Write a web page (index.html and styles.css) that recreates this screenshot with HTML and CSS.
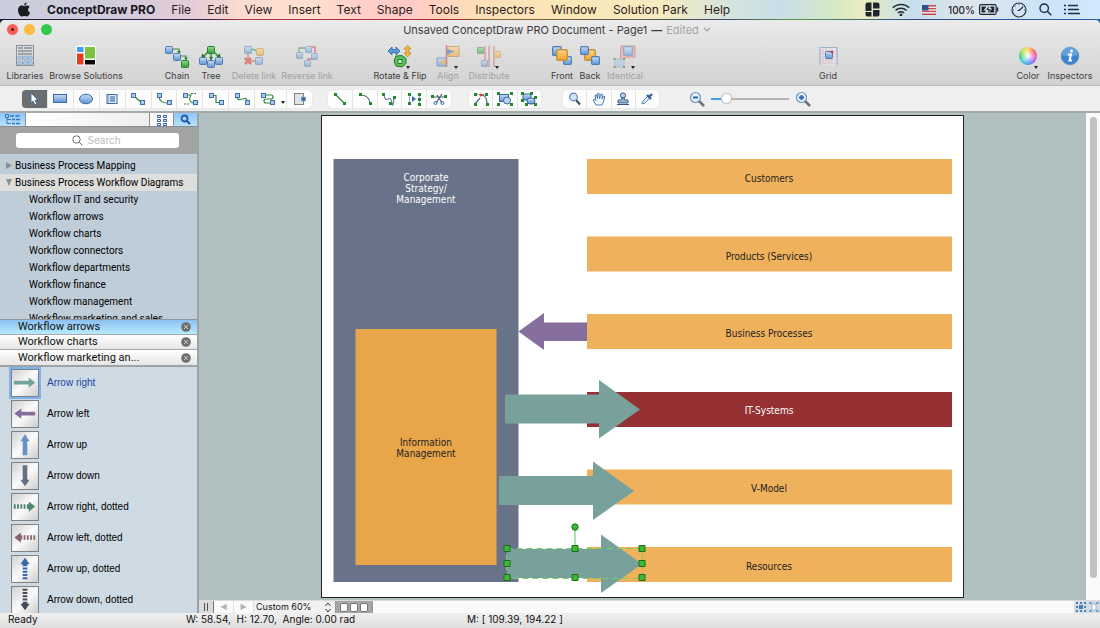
FILE: index.html
```html
<!DOCTYPE html>
<html lang="en">
<head>
<meta charset="utf-8">
<title>ConceptDraw PRO</title>
<link rel="stylesheet" href="styles.css">
</head>
<body>
<svg class="defs" aria-hidden="true">
  <defs>
    <linearGradient id="blue" x1="0" y1="0" x2="0" y2="1"><stop offset="0" stop-color="#c6dcf4"/><stop offset="1" stop-color="#5f95d3"/></linearGradient>
    <linearGradient id="green" x1="0" y1="0" x2="0" y2="1"><stop offset="0" stop-color="#8fdc86"/><stop offset="1" stop-color="#2f9c36"/></linearGradient>
    <linearGradient id="gold" x1="0" y1="0" x2="0" y2="1"><stop offset="0" stop-color="#ffd98a"/><stop offset="1" stop-color="#f0a024"/></linearGradient>
    <symbol id="n" viewBox="0 0 8 8"><rect x=".5" y=".5" width="7" height="7" rx="1" fill="url(#blue)" stroke="#4f7db4"/></symbol>
    <symbol id="g" viewBox="0 0 8 8"><rect x=".5" y=".5" width="7" height="7" rx="1" fill="url(#green)" stroke="#2b8030"/></symbol>
    <symbol id="y" viewBox="0 0 8 8"><rect x=".5" y=".5" width="7" height="7" rx="1" fill="url(#gold)" stroke="#c79240"/></symbol>
    <symbol id="s" viewBox="0 0 5 5"><rect x=".5" y=".5" width="4" height="4" fill="#a9cbef" stroke="#3f71ae"/></symbol>
    <symbol id="d" viewBox="0 0 3 3"><rect width="3" height="3" fill="#1f8a2b"/></symbol>
    <symbol id="x" viewBox="0 0 10 10"><circle cx="5" cy="5" r="4.8" fill="#6e6e6e"/><path d="M3 3l4 4M7 3l-4 4" stroke="#c4c4c4" stroke-width="1"/></symbol>
  </defs>
</svg>

<header class="menubar">
  <svg class="apple" viewBox="0 0 14 16"><path d="M9.600.5c.1 1.300-1.100 2.900-2.500 2.900C6.900 2.100 8.200.7 9.600.5zM7.200 4.300c.6 0 1.500-.8 2.800-.8 1 0 2 .5 2.700 1.500-2.300 1.400-2 4.600.5 5.600-.5 1.500-1.800 3.900-3.200 3.900-1 0-1.400-.6-2.600-.6s-1.600.6-2.600.6C3 14.500 1 11 1 8.200c0-3 1.900-4.600 3.700-4.600 1.200 0 1.900.7 2.500.7z" fill="#1b1b22"/></svg>
  <nav class="menus">
    <button class="app-name">ConceptDraw PRO</button>
    <button>File</button><button>Edit</button><button>View</button><button>Insert</button><button>Text</button><button>Shape</button><button>Tools</button><button>Inspectors</button><button>Window</button><button>Solution Park</button><button>Help</button>
  </nav>
  <div class="tray">
    <svg width="15" height="15" viewBox="0 0 15 15"><path d="M2.500.5H6.500V9H.500V2.500a2 2 0 0 1 2-2zM.5 10h6v4.500h-4a2 2 0 0 1-2-2zM8 .5h4.500a2 2 0 0 1 2 2v4H8zM8 8h6.500v4.500a2 2 0 0 1-2 2H8z" fill="#22262c"/></svg>
    <svg width="18" height="13" viewBox="0 0 18 13" fill="none" stroke="#1f2c38" stroke-width="1.500"><path d="M.8 4.800a11.600 11.600 0 0 1 16.400 0M3.500 7.500a7.800 7.800 0 0 1 11 0M6 10a4.200 4.200 0 0 1 6 0"/><circle cx="9" cy="12" r=".7" fill="#1f2c38"/></svg>
    <svg width="14" height="10" viewBox="0 0 14 10"><rect width="14" height="10" fill="#f1e3e2"/><path d="M0 .7h14M0 3.600h14M0 6.400h14M0 9.300h14" stroke="#c24a4e" stroke-width="1.400"/><rect width="6.500" height="5.500" fill="#33508a"/></svg>
    <span class="charge">100%
      <svg width="20" height="11" viewBox="0 0 20 11"><rect x=".6" y=".6" width="16.500" height="9.800" rx="1.500" fill="none" stroke="#1e2730" stroke-width="1.200"/><path d="M18.500 3.500v4" stroke="#1e2730" stroke-width="1.500"/><path d="M2.500 2.500h5l-3 4h2.500l-1 2H2.500zM12 2.500h3.200v6H9.500l3.200-4.500h-1.700z" fill="#1e2730"/><path d="M10.500 1L6.500 6h2.500l-.5 4 4-5H9.800z" fill="#1e2730" stroke="#dbe9ee" stroke-width=".6"/></svg></span>
    <svg width="16" height="16" viewBox="0 0 16 16" fill="none" stroke="#27313a"><circle cx="8" cy="8" r="7" stroke-width="1.200"/><path d="M8 8.500l4-3.500M8.500 8.500H6.500" stroke-width="1.200"/><path d="M8 2v1.200M2 8h1M13 8h1M4 4l.7.7M12 4l-.7.7" stroke-width=".8"/></svg>
    <svg width="13" height="13" viewBox="0 0 13 13" fill="none" stroke="#1f2c38" stroke-width="1.400"><circle cx="5.200" cy="5.200" r="4.200"/><path d="M8.300 8.300l4 4"/></svg>
    <svg width="16" height="11" viewBox="0 0 16 11" stroke="#1f2c38" stroke-width="1.500"><path d="M0 1.500h2M0 5.500h2M0 9.500h2M4 1.500h10M4 5.500h11M4 9.500h12"/></svg>
  </div>
</header>

<main class="window">
  <div class="titlebar">
    <div class="lights"><button class="close" aria-label="Close"></button><button class="mini" aria-label="Minimize"></button><button class="full" aria-label="Zoom"></button></div>
    <h1>Unsaved ConceptDraw PRO Document - Page1 <b>—</b> <span>Edited</span><svg width="8" height="5" viewBox="0 0 8 5"><path d="M1 1l3 3 3-3" fill="none" stroke="#a0a0a0" stroke-width="1.200"/></svg></h1>
  </div>

  <div class="toolbar">
    <div class="group">
      <button class="w50"><svg viewBox="0 0 24 24"><rect x="3.500" y="1.500" width="17" height="20" fill="#d9dcdf" stroke="#8d9299"/><path d="M5 4h4M11 4h8M5 7h14M5 10h14" stroke="#8b9096" stroke-width="1.500"/><path d="M9.500 2.500v19M15 11v10" stroke="#a4abb3"/><g fill="#a9cdf2" stroke="#7b97b6" stroke-width=".6"><circle cx="6.500" cy="14" r="2"/><circle cx="12.300" cy="14" r="2"/><circle cx="17.500" cy="14" r="2"/><circle cx="6.500" cy="19" r="2"/><circle cx="12.300" cy="19" r="2"/><circle cx="17.500" cy="19" r="2"/></g></svg>Libraries</button>
      <button class="w72"><svg viewBox="0 0 24 24"><rect x="2" y="1.500" width="20" height="20" rx="2" fill="#fff"/><path d="M3 3h6.500v5H3z" fill="#3f9ef2"/><path d="M3 9.500h6.500v11H3z" fill="#e23d21"/><path d="M11 3h10v11.500H11z" fill="#7cc242"/><path d="M11 16h10v4.500H11z" fill="#050505"/></svg>Browse Solutions</button>
    </div>
    <div class="group">
      <button class="w34"><svg viewBox="0 0 24 24"><path d="M8 5h6v4M16 12h5v5" fill="none" stroke="#3a9a3c" stroke-width="1.200"/><path d="M12 7h4l-2 2.500zM19 13.500h4l-2 2.500z" fill="#2b8030"/><use href="#n" x="0" y="2" width="8" height="8"/><use href="#n" x="8" y="9" width="8" height="8"/><use href="#g" x="16" y="16" width="8" height="8"/></svg>Chain</button>
      <button class="w34"><svg viewBox="0 0 24 24"><path d="M9 8l-5 5M15 8l5 5M12 9v8" stroke="#2f9236" stroke-width="1.500"/><path d="M2.500 13.500l.5-4 3.500 3zM21.500 13.500l-.5-4-3.500 3zM10 13h4l-2 3z" fill="#237a2a"/><use href="#g" x="8" y="2" width="8" height="8"/><use href="#n" x="0" y="13" width="8" height="8"/><use href="#n" x="8" y="16" width="8" height="8"/><use href="#n" x="16" y="13" width="8" height="8"/></svg>Tree</button>
      <button class="w52" disabled><svg viewBox="0 0 24 24"><path d="M9 5l7 2" stroke="#2f9236" stroke-width="1.500"/><path d="M6 9v8h9" fill="none" stroke="#d64a35" stroke-width="1.300"/><use href="#n" x="2" y="2" width="8" height="8"/><use href="#y" x="14" y="4" width="8" height="8"/><path d="M3 14l6 6M9 14l-6 6" stroke="#d63a25" stroke-width="2.500"/><use href="#n" x="13" y="13" width="8" height="8"/></svg>Delete link</button>
      <button class="w54" disabled><svg viewBox="0 0 24 24"><path d="M4 8V4h7" fill="none" stroke="#2f9236" stroke-width="1.300"/><path d="M16 3h4v6M19 15h-6v3" fill="none" stroke="#d6362f" stroke-width="1.500"/><use href="#n" x="1" y="8" width="7" height="7"/><use href="#n" x="10" y="2" width="7" height="7"/><use href="#n" x="16" y="9" width="7" height="7"/><use href="#n" x="9" y="16" width="7" height="7"/></svg>Reverse link</button>
    </div>
    <div class="group">
      <button class="w56"><svg viewBox="0 0 24 24"><path d="M0 7l4-4v2.500h4V3l4 4-4 4V8.500H4V11z" fill="#5a9be0" stroke="#275d9e" stroke-width=".8"/><path d="M19.500 1.500l3.500 3.500h-2.200v4H23L19.500 13 16 9h2.200V5H16z" fill="#f6b93b" stroke="#c0851c" stroke-width=".8"/><path d="M8 12l6-.5 4 3v5l-4 3.500-6-1-2-5z" fill="#58c45c" stroke="#237a2a"/><path d="M10 15.500h4v4h-4z" fill="#e5f3e3" stroke="#237a2a"/></svg>Rotate &amp; Flip<i class="caret"></i></button>
      <button class="w40" disabled><svg viewBox="0 0 24 24"><path d="M10.500 1v22" stroke="#c43a3a" stroke-width="1.500"/><path d="M12 2.500h11v10H12z" fill="url(#gold)" stroke="#b58233"/><path d="M11 5l8 2.500-8 3z" fill="#3b72b8"/><path d="M1 14h9v8H1z" fill="url(#blue)" stroke="#3f6da6"/><path d="M10 15l-6 3 6 3z" fill="#f0a024"/></svg>Align<i class="caret"></i></button>
      <button class="w42" disabled><svg viewBox="0 0 24 24"><path d="M8 2v21M12 2v21M17 2v21" stroke="#c43a3a"/><use href="#g" x="0" y="3" width="7" height="7"/><use href="#n" x="4" y="16" width="7" height="7"/><use href="#y" x="17" y="7" width="7" height="7"/></svg>Distribute<i class="caret"></i></button>
    </div>
    <div class="group">
      <button class="w28"><svg viewBox="0 0 24 24"><use href="#n" x="2" y="2" width="10" height="10"/><use href="#n" x="13" y="12" width="9" height="9"/><use href="#y" x="6" y="5" width="12" height="12"/></svg>Front</button>
      <button class="w28"><svg viewBox="0 0 24 24"><use href="#y" x="6" y="5" width="12" height="12"/><use href="#n" x="2" y="2" width="9" height="9"/><use href="#n" x="13" y="12" width="9" height="9"/></svg>Back</button>
      <button class="w42" disabled><svg viewBox="0 0 24 24"><path d="M8 2h14v11h-8l-7 5z" fill="#eba9a0" stroke="#d35b50"/><use href="#n" x="10" y="2" width="10" height="10"/><rect x="2" y="15" width="9" height="8" fill="#a9c8e8" stroke="#9ab"/><path d="M.5 14h2v2h-2zM10 14h2v2h-2zM.5 22h2v2h-2zM10 22h2v2h-2z" fill="#1f8a2b"/></svg>Identical<i class="caret"></i></button>
    </div>
    <div class="group">
      <button class="w40"><svg viewBox="0 0 24 24"><rect x="4" y="3.500" width="17" height="17" fill="#e3e8ee"/><path d="M4 7h17M4 10h17M4 13h17M4 16h17M4 19h17M7 4v16M10 4v16M13 4v16M16 4v16" stroke="#e0b4b4" stroke-width=".7"/><path d="M4 21V3.500h17V21" fill="none" stroke="#9db2cc" stroke-width="1.200"/><use href="#n" x="9" y="7" width="8" height="8"/><circle cx="16" cy="8" r="1.300" fill="#d82a1c"/></svg>Grid</button>
    </div>
    <div class="group">
      <button class="w36"><span class="wheel"></span>Color<i class="caret"></i></button>
      <button class="w48"><svg viewBox="0 0 24 24"><circle cx="12" cy="12" r="8.800" fill="#3a83cd" stroke="#6f93b8"/><path d="M4 11a8 8 0 0 1 16 0q-8 3-16 0z" fill="#7db4ea" opacity=".6"/><circle cx="13.500" cy="7" r="1.500" fill="#fff"/><path d="M10 10.500h3l-1.500 6h2.500" fill="none" stroke="#fff" stroke-width="2"/></svg>Inspectors</button>
    </div>
  </div>

  <div class="tools">
    <div class="seg seg-main">
      <button class="on" aria-label="Select"><svg viewBox="0 0 16 14"><path d="M5 1l7 7H9l1.800 4-2 .9L7 9 5 11z" fill="#fff" stroke="#3b6da8" stroke-width=".9"/></svg></button>
      <button aria-label="Rectangle"><svg viewBox="0 0 16 14"><rect x="1.500" y="2.500" width="13" height="8" fill="url(#blue)" stroke="#3a68a6"/></svg></button>
      <button aria-label="Ellipse"><svg viewBox="0 0 16 14"><ellipse cx="8" cy="7" rx="6.500" ry="4.800" fill="url(#blue)" stroke="#3a68a6"/></svg></button>
      <button aria-label="Text"><svg viewBox="0 0 16 14"><rect x="3" y="2.500" width="10" height="9" fill="#dceafa" stroke="#3f6ca6"/><path d="M6 5h5M6 7h5M6 9h5" stroke="#35547c"/><path d="M4.500 3v8" stroke="#8db4e0"/></svg></button>
      <button aria-label="Direct connector"><svg viewBox="0 0 16 14"><path d="M4 4l8 7" stroke="#2c8a32" stroke-width="1.200"/><use href="#s" x="1" y="1" width="5" height="5"/><use href="#s" x="10" y="8" width="5" height="5"/></svg></button>
      <button aria-label="Arc connector"><svg viewBox="0 0 16 14"><path d="M3 5q1 6 8 6" fill="none" stroke="#2c8a32" stroke-width="1.200"/><use href="#s" x="1" y="1" width="5" height="5"/><use href="#s" x="11" y="8" width="5" height="5"/></svg></button>
      <button aria-label="Bezier connector"><svg viewBox="0 0 16 14"><path d="M5 3h4q-2 4-1 5.500t3 2.500" fill="none" stroke="#2c8a32" stroke-width="1.100"/><path d="M9 1.500h5M2 12h6" stroke="#2c8a32" stroke-dasharray="2 1"/><use href="#s" x="1" y="1" width="5" height="5"/><use href="#s" x="11" y="8" width="5" height="5"/></svg></button>
      <button aria-label="Smart connector"><svg viewBox="0 0 16 14"><path d="M4 3.500h4v7h5" fill="none" stroke="#2c8a32" stroke-width="1.200"/><use href="#s" x="1" y="1" width="5" height="5"/><use href="#s" x="11" y="8" width="5" height="5"/></svg></button>
      <button aria-label="Curved connector"><svg viewBox="0 0 16 14"><path d="M3 4q0 4 3 3.500t5-1 2 3" fill="none" stroke="#2c8a32" stroke-width="1.200"/><use href="#s" x="1" y="1" width="5" height="5"/><use href="#s" x="11" y="8" width="5" height="5"/></svg></button>
      <button aria-label="Round connector"><svg viewBox="0 0 16 14"><path d="M4 3h7q2 0 2 2t-2 2H6q-2 0-2 2t2 2h5" fill="none" stroke="#2c8a32" stroke-width="1.200"/><use href="#s" x="1" y="1" width="5" height="5"/><use href="#s" x="10" y="8" width="5" height="5"/></svg></button>
      <button class="drop" aria-label="More connectors"><i class="caret"></i></button>
      <button aria-label="Insert page"><svg viewBox="0 0 16 14"><rect x="2.500" y="1.500" width="9" height="11" fill="#dfe2e6" stroke="#7d838a"/><path d="M9.500 5l4 4M13.500 5l-4 4M9 7h5" stroke="#3169ae" stroke-width="1.200"/></svg></button>
    </div>
    <div class="seg seg-5">
      <button aria-label="Line"><svg viewBox="0 0 16 14"><path d="M4 3l8 8" stroke="#2c8a32" stroke-width="1.200"/><use href="#d" x="2" y="1" width="3" height="3"/><use href="#d" x="11" y="10" width="3" height="3"/></svg></button>
      <button aria-label="Arc"><svg viewBox="0 0 16 14"><path d="M3 3q9 0 10 8" fill="none" stroke="#4a6c92" stroke-width="1.200"/><use href="#d" x="2" y="1" width="3" height="3"/><use href="#d" x="12" y="10" width="3" height="3"/></svg></button>
      <button aria-label="Curve"><svg viewBox="0 0 16 14"><path d="M3 3q1 6 4 4t4 4 2-5" fill="none" stroke="#6d879f" stroke-width="1.200"/><use href="#d" x="1" y="1" width="3" height="3"/><use href="#d" x="12" y="4" width="3" height="3"/><use href="#d" x="8" y="10" width="3" height="3"/></svg></button>
      <button aria-label="Split"><svg viewBox="0 0 16 14"><path d="M3.500 2v10M13.500 2v10" stroke="#8daacb"/><path d="M6 4l4 3-4 3z" fill="#376bb0"/><use href="#d" x="2" y="1" width="3" height="3"/><use href="#d" x="2" y="10" width="3" height="3"/><use href="#d" x="12" y="1" width="3" height="3"/><use href="#d" x="12" y="6" width="3" height="3"/><use href="#d" x="12" y="11" width="3" height="3"/></svg></button>
      <button aria-label="Cut"><svg viewBox="0 0 16 14"><path d="M2 5h12M5 11l6-9M11 11L6 3" stroke="#53616f" stroke-width="1.200"/><use href="#d" x="0" y="3" width="3" height="3"/><use href="#d" x="13" y="3" width="3" height="3"/><circle cx="4.500" cy="11" r="1.500" fill="none" stroke="#376bb0"/><circle cx="11.500" cy="11" r="1.500" fill="none" stroke="#376bb0"/></svg></button>
    </div>
    <div class="seg seg-3">
      <button aria-label="Edit points"><svg viewBox="0 0 16 14"><path d="M2 12l5-6M8 3q6 0 6 9" fill="none" stroke="#4a6c92" stroke-width="1.200"/><path d="M3 2.500h10" stroke="#6d879f" stroke-dasharray="2 1"/><circle cx="8" cy="3" r="1.500" fill="#d53b2e"/><use href="#d" x="1" y="1" width="3" height="3"/><use href="#d" x="1" y="11" width="3" height="3"/><use href="#d" x="12" y="1" width="3" height="3"/><use href="#d" x="13" y="11" width="3" height="3"/></svg></button>
      <button aria-label="Group"><svg viewBox="0 0 16 14"><rect x="2.500" y="2.500" width="9" height="7" fill="url(#blue)" stroke="#3a68a6"/><circle cx="10" cy="8.500" r="3.500" fill="#b9d4f1" stroke="#3a68a6"/><use href="#d" x="0" y="0" width="3" height="3"/><use href="#d" x="0" y="11" width="3" height="3"/><use href="#d" x="13" y="0" width="3" height="3"/><use href="#d" x="13" y="11" width="3" height="3"/></svg></button>
      <button aria-label="Ungroup"><svg viewBox="0 0 16 14"><rect x="2" y="2" width="8" height="6" fill="url(#blue)" stroke="#3a68a6"/><rect x="6" y="6" width="8" height="6" rx="3" fill="url(#blue)" stroke="#3a68a6"/><use href="#d" x="0" y="0" width="3" height="3"/><use href="#d" x="0" y="7" width="3" height="3"/><use href="#d" x="9" y="0" width="3" height="3"/><use href="#d" x="13" y="4" width="3" height="3"/><use href="#d" x="4" y="11" width="3" height="3"/><use href="#d" x="13" y="11" width="3" height="3"/></svg></button>
    </div>
    <div class="seg seg-4">
      <button aria-label="Zoom tool"><svg viewBox="0 0 16 14"><path d="M9 8l4 4.500" stroke="#45474d" stroke-width="2"/><circle cx="6.500" cy="5" r="3.800" fill="#cfe4fa" stroke="#5b85b5" stroke-width="1.200"/></svg></button>
      <button aria-label="Hand"><svg viewBox="0 0 16 14"><path d="M5 13L2 8l1.200-.8L5 8.500 4 3.200l1.300-.4L6.600 6.500V1.500h1.500L8.500 6.500 10 2l1.400.4L11 7l1.600-3 1.200.6L12.500 10 11 13z" fill="#f1f7ff" stroke="#3c6eae" stroke-width=".9"/></svg></button>
      <button aria-label="Stamp"><svg viewBox="0 0 16 14"><circle cx="8" cy="3.500" r="2.600" fill="#b9d1ec" stroke="#35547c"/><path d="M7 6h2l.5 2H13v3H3V8h3.500z" fill="#93b6de" stroke="#35547c" stroke-width=".9"/><path d="M2 12.500h12" stroke="#35547c"/></svg></button>
      <button aria-label="Eyedropper"><svg viewBox="0 0 16 14"><path d="M3 12l1-3 5-5 2 2-5 5z" fill="#dceafa" stroke="#4e7db5" stroke-width=".9"/><path d="M8 3l4 4M9.500 5.500L13 2" stroke="#2f5c96" stroke-width="2.200"/></svg></button>
    </div>
    <div class="zoom">
      <button aria-label="Zoom out"><svg width="16" height="16" viewBox="0 0 16 16"><path d="M10 10l5 5" stroke="#6d7074" stroke-width="2.500"/><circle cx="6.500" cy="6.500" r="5" fill="#e4f0fc" stroke="#7396bd" stroke-width="1.200"/><path d="M4 6.500h5" stroke="#2d62a5" stroke-width="2"/></svg></button>
      <input type="range" min="0" max="100" value="16" aria-label="Zoom">
      <button aria-label="Zoom in"><svg width="16" height="16" viewBox="0 0 16 16"><path d="M10 10l5 5" stroke="#6d7074" stroke-width="2.500"/><circle cx="6.500" cy="6.500" r="5" fill="#e4f0fc" stroke="#7396bd" stroke-width="1.200"/><path d="M4 6.500h5M6.500 4v5" stroke="#2d62a5" stroke-width="2"/></svg></button>
    </div>
  </div>

  <div class="work">
    <aside class="sidebar">
      <div class="tabs">
        <button class="tab lit" aria-label="Tree view"><svg width="15" height="11" viewBox="0 0 15 11" fill="none" stroke="#3c75ae"><path d="M.5.500h3v3h-3zM2 4v5.500h4M2 5.500h4"/><path d="M5 2h4M10.500 2h4M7 5.500h3M11 5.500h4M7 9.500h3M11 9.500h4" stroke-width="1.500"/></svg></button>
        <span class="tab-fill"></span>
        <button class="tab" aria-label="Grid view"><svg width="10" height="12" viewBox="0 0 10 12" fill="#e3effc" stroke="#35669f"><path d="M.5 1.500h3v2h-3zM6.500 1.500h3v2h-3zM.5 5.500h3v2h-3zM6.500 5.500h3v2h-3zM.5 9.500h3v2h-3zM6.500 9.500h3v2h-3z"/></svg></button>
        <button class="tab lit" aria-label="Search"><svg width="11" height="11" viewBox="0 0 11 11" fill="none" stroke="#2158a4"><circle cx="4.500" cy="4.500" r="3" stroke-width="1.800"/><path d="M6.500 6.500l3.500 3.500" stroke-width="2.200"/></svg></button>
      </div>
      <div class="search">
        <label><svg width="11" height="11" viewBox="0 0 11 11" fill="none" stroke="#6b6b6b"><circle cx="4.500" cy="4.500" r="3.700"/><path d="M7.200 7.200l3.300 3.300"/></svg><input type="text" placeholder="Search" aria-label="Search"></label>
      </div>
      <ul class="tree">
        <li class="top">Business Process Mapping</li>
        <li class="top open">Business Process Workflow Diagrams</li>
        <li>Workflow IT and security</li><li>Workflow arrows</li><li>Workflow charts</li><li>Workflow connectors</li><li>Workflow departments</li><li>Workflow finance</li><li>Workflow management</li><li>Workflow marketing and sales</li>
      </ul>
      <ul class="libs">
        <li class="active">Workflow arrows<button aria-label="Close library"><svg width="10" height="10"><use href="#x"/></svg></button></li>
        <li>Workflow charts<button aria-label="Close library"><svg width="10" height="10"><use href="#x"/></svg></button></li>
        <li>Workflow marketing an...<button aria-label="Close library"><svg width="10" height="10"><use href="#x"/></svg></button></li>
      </ul>
      <ul class="shapes">
        <li class="picked"><svg viewBox="0 0 28 28"><path d="M2 11.500h16V8l7 5.500-7 5.500v-3.500H2z" fill="#73a49c"/></svg>Arrow right</li>
        <li><svg viewBox="0 0 28 28"><path d="M25 11.500H10V8l-7.500 5.500L10 19v-3.500h15z" fill="#866d9e"/></svg>Arrow left</li>
        <li><svg viewBox="0 0 28 28"><path d="M11.500 25V10H9l5-7.500L19 10h-2.500v15z" fill="#6b90c6"/></svg>Arrow up</li>
        <li><svg viewBox="0 0 28 28"><path d="M11.500 2.500v15.500H9l5 7 5-7h-2.500V2.500z" fill="#657085"/></svg>Arrow down</li>
        <li><svg viewBox="0 0 28 28"><path d="M2 11h2v5H2zM5.500 11h2v5h-2zM9 11h2v5H9zM12.500 11h2v5h-2zM16 11h2V8l7 5.500-7 5.500v-3h-2z" fill="#4e8676"/></svg>Arrow right, dotted</li>
        <li><svg viewBox="0 0 28 28"><path d="M25 11h-2v5h2zM21.500 11h-2v5h2zM18 11h-2v5h2zM14.500 11h-2v5h2zM11 11H9.500V8l-7 5.500 7 5.500v-3H11z" fill="#876674"/></svg>Arrow left, dotted</li>
        <li><svg viewBox="0 0 28 28"><path d="M11.500 25v-2h5v2zM11.500 21.500v-2h5v2zM11.500 18v-2h5v2zM11.500 14.500v-2h5v2zM11.500 11V9H9l5-7 5 7h-2.500v2z" fill="#3866ad"/></svg>Arrow up, dotted</li>
        <li><svg viewBox="0 0 28 28"><path d="M11.500 2v2h5V2zM11.500 5.500v2h5v-2zM11.500 9v2h5V9zM11.500 12.500v2h5v-2zM11.500 16v2H9l5 7 5-7h-2.500v-2z" fill="#454c55"/></svg>Arrow down, dotted</li>
      </ul>
    </aside>

    <section class="editor">
      <div class="canvas">
        <svg class="page" width="643" height="483" viewBox="0 0 643 483">
          <rect x=".5" y=".5" width="642" height="482" fill="#fff" stroke="#222"/>
          <rect x="12.500" y="44" width="185" height="423" fill="#687289"/>
          <rect x="34.500" y="214" width="141" height="236" fill="#e9a54a"/>
          <g fill="#efb15b">
            <rect x="266" y="44" width="365" height="35"/><rect x="266" y="121.500" width="365" height="35"/><rect x="266" y="199" width="365" height="35"/>
            <rect x="266" y="354.500" width="365" height="35"/><rect x="266" y="432" width="365" height="35"/>
          </g>
          <rect x="266" y="277" width="365" height="35" fill="#953033"/>
          <path d="M266 207.500H223V198L197.500 216.500 223 235V226H266z" fill="#866f9e"/>
          <g fill="#78a19b">
            <path d="M184 279.500h94V265l41 29.500-41 29V308.500h-94z"/>
            <path d="M178 361h94v-14.500l41 29.500-41 29V390h-94z"/>
            <path d="M186 434h94v-14.500l41 29.500-41 29V463h-94z"/>
          </g>
          <g class="label">
            <text class="light" x="105" y="66">Corporate</text><text class="light" x="105" y="77">Strategy/</text><text class="light" x="105" y="88">Management</text>
            <text x="105" y="331">Information</text><text x="105" y="342">Management</text>
            <text x="448" y="67">Customers</text><text x="448" y="145">Products (Services)</text><text x="448" y="222">Business Processes</text>
            <text class="light" x="448" y="299">IT-Systems</text><text x="448" y="377">V-Model</text><text x="448" y="455">Resources</text>
          </g>
          <rect x="185.500" y="433.500" width="136" height="30" fill="none" stroke="#74cf64" stroke-dasharray="6 4"/>
          <path d="M254 412v21" stroke="#5cc957"/>
          <g fill="#3cba35" stroke="#1f6b1c">
            <circle cx="254" cy="412" r="3.200"/>
            <path d="M183 430.500h6v6h-6zM251 430.500h6v6h-6zM318 430.500h6v6h-6zM183 445.500h6v6h-6zM318 445.500h6v6h-6zM183 459.500h6v6h-6zM251 459.500h6v6h-6zM318 459.500h6v6h-6z"/>
          </g>
        </svg>
      </div>
      <div class="vscroll"><span></span></div>
      <div class="footbar">
        <button class="pause" aria-label="Toggle pages"><svg width="6" height="8"><path d="M1.500 0v8M4.500 0v8" stroke="#555"/></svg></button>
        <button class="page-nav" aria-label="Previous page">◀</button>
        <button class="page-nav" aria-label="Next page">▶</button>
        <div class="pick"><select aria-label="Zoom level"><option>Custom 60%</option></select><svg width="8" height="11" viewBox="0 0 8 11"><path d="M1.500 4L4 1l2.500 3M1.500 7L4 10l2.500-3" fill="none" stroke="#333"/></svg></div>
        <button class="pages" aria-label="Page layout"><i></i><i></i><i></i></button>
        <span class="rail"></span>
        <button class="fit" aria-label="Fit page"><svg width="12" height="12" viewBox="0 0 12 12"><path d="M1 1h2v2H1zM9 1h2v2H9zM1 9h2v2H1zM9 9h2v2H9zM4 4h4v4H4zM5 1h2v2H5zM5 9h2v2H5zM1 5h2v2H1zM9 5h2v2H9z" fill="#4e7fbd"/></svg></button>
        <button class="fit" aria-label="Page width"><svg width="12" height="12" viewBox="0 0 12 12"><path d="M1 1h3v2H1zM8 1h3v2H8zM1 9h3v2H1zM8 9h3v2H8z" fill="#7aa3d2"/><path d="M4 3h4v6H4z" fill="#fff" stroke="#9ab4d0"/></svg></button>
      </div>
    </section>
  </div>

  <footer class="status"><span class="ready">Ready</span><span class="dims">W: 58.54,&nbsp; H: 12.70,&nbsp; Angle: 0.00 rad</span><span>M: [ 109.39, 194.22 ]</span></footer>
</main>
</body>
</html>
```
FILE: styles.css
```css
* { box-sizing: border-box; }
html, body { height: 100%; margin: 0; }
body {
  display: flex;
  flex-direction: column;
  overflow: hidden;
  background: linear-gradient(90deg, #1c1d3c 0, #3a1c4a 19%, #b33a44 22%, #a42c2c 42%, #8a6a30 44%, #3c4f6e 66%, #5b9a50 72%, #2f4d8c 83%, #2a60a8 100%);
  font-family: Inter, "Liberation Sans", sans-serif;
  font-size: 10px;
  color: #111;
}
button { padding: 0; border: 0; background: none; font: inherit; color: inherit; }
ul { margin: 0; padding: 0; list-style: none; }
svg { display: block; flex: none; }
.defs { position: absolute; width: 0; height: 0; }
.caret { display: block; border: 2px solid transparent; border-top: 3px solid #222; border-bottom: 0; }

.menubar {
  display: flex;
  align-items: center;
  flex: none;
  height: 19px;
  padding: 0 20px 0 17px;
  background: linear-gradient(90deg, #cbcedc 0, #cfcbdc 10%, #e3ccd8 17%, #fbdcd2 22%, #ffe0d0 28%, #ffcfc8 33%, #ffcac6 37%, #fddfb8 43%, #fae7b6 52%, #f6ebc0 60%, #d3e4df 67%, #c8dee8 71%, #d6e9c4 76%, #e9ecc0 78.5%, #c7deee 83%, #dfe5ea 88%, #cbe3fa 95%, #d2e8fd 100%);
  font-size: 12px;
  color: #2c1d1c;
}
.apple { width: 14px; height: 16px; margin-right: 16px; }
.menus { display: flex; gap: 16px; white-space: nowrap; }
.app-name { font-weight: 700; color: #16161c; }
.tray { display: flex; align-items: center; gap: 12px; margin-left: auto; color: #1e2730; }
.charge { display: flex; align-items: center; gap: 4px; font-size: 10px; font-weight: 500; }

.window {
  display: flex;
  flex-direction: column;
  flex: 1;
  min-height: 0;
  margin-top: 1px;
  border-radius: 5px 5px 0 0;
  overflow: hidden;
  background: #ececec;
}
.titlebar { display: grid; grid-template-columns: 1fr auto 1fr; align-items: center; flex: none; height: 19px; background: linear-gradient(#ebebeb, #e3e3e3); }
.lights { display: flex; gap: 6px; padding-left: 7px; }
.lights button { width: 11px; height: 11px; border-radius: 50%; }
.close { background: radial-gradient(circle, #5c120f 0 1px, #fb5f57 2px); }
.mini { background: #fdbc40; }
.full { background: #34c84a; }
.titlebar h1 { display: flex; align-items: center; gap: 4px; margin: 0 0 0 14px; font-size: 11px; font-weight: 400; color: #3c3c3c; white-space: nowrap; }
.titlebar h1 span { color: #a4a4a4; }

.toolbar {
  display: flex;
  flex: none;
  height: 47px;
  padding-right: 6px;
  background: linear-gradient(#e3e3e3, #d2d2d2);
  border-bottom: 1px solid #b9b9b9;
  font-size: 9px;
  color: #3d3d3d;
}
.group { display: flex; }
.group + .group { margin-left: 38px; }
.group:nth-child(n + 5) { margin-left: auto; }
.group button { position: relative; display: flex; flex-direction: column; align-items: center; gap: 2px; padding-top: 5px; line-height: 12px; white-space: nowrap; }
.group svg { width: 24px; height: 24px; }
.group button:disabled { color: #a2a2a2; }
.group button:disabled svg { opacity: .55; }
.group .caret { position: absolute; left: 50%; top: 27px; margin-left: 6px; }
.w28 { width: 28px; } .w34 { width: 34px; } .w36 { width: 36px; } .w40 { width: 40px; } .w42 { width: 42px; }
.w48 { width: 48px; } .w50 { width: 50px; } .w52 { width: 52px; } .w54 { width: 54px; } .w56 { width: 56px; } .w72 { width: 72px; }
.wheel {
  width: 18px;
  height: 18px;
  margin: 3px 0;
  border-radius: 50%;
  background: radial-gradient(circle, #fff 0, #fff0 70%), conic-gradient(#ffd34d, #ff5b4a, #f04cc0, #8b5cf0, #3e8df0, #35c8d8, #35d060, #b8e040, #ffd34d);
}

.tools { display: flex; align-items: center; flex: none; height: 27px; padding-left: 22px; background: #efefef; border-bottom: 2px solid #a5abab; }
.seg { display: flex; height: 18px; border-radius: 4px; background: #fdfdfd; box-shadow: 0 0 1px #b8b8b8; overflow: hidden; }
.seg button { display: flex; align-items: center; justify-content: center; flex: 1; border-left: 1px solid #e4e4e4; }
.seg button:first-child { border-left: 0; }
.seg svg { width: 16px; height: 14px; }
.seg .on { background: #6c6d6e; }
.seg .drop { flex: none; width: 6px; border-left: 0; align-items: flex-end; padding-bottom: 4px; }
.seg-main { width: 290px; margin-right: 16px; }
.seg-5 { width: 123px; margin-right: 18px; }
.seg-3 { width: 72px; margin-right: 22px; }
.seg-4 { width: 96px; margin-right: 30px; }
.zoom { display: flex; align-items: center; gap: 6px; }
.zoom input {
  appearance: none;
  width: 78px;
  height: 12px;
  margin: 0;
  background: linear-gradient(90deg, #3f9ff5 16px, #b4b4b4 16px) center / 100% 2px no-repeat;
}
.zoom input::-webkit-slider-thumb { appearance: none; width: 9px; height: 9px; border-radius: 50%; background: #fff; box-shadow: 0 0 1px 1px #bbb; }

.work { display: flex; flex: 1; min-height: 0; }
.sidebar { display: flex; flex-direction: column; flex: none; width: 199px; border-right: 2px solid #9ba3a6; background: #cfdbe4; line-height: 17px; }
.tabs { display: flex; flex: none; height: 14px; border-bottom: 1px solid #8a8d90; background: #fafafa; }
.tab { display: flex; align-items: center; justify-content: center; width: 24px; border-left: 1px solid #8d9093; }
.tab:first-child { width: 26px; border-left: 0; border-right: 1px solid #8d9093; }
.tab-fill { flex: 1; background: linear-gradient(90deg, #fff, #efefef); }
.lit { background: linear-gradient(#8ec5fa, #b9e2fd); }
.search { display: flex; flex: none; height: 27px; padding: 6px 18px 6px 16px; background: #a2a3a3; }
.search label { display: flex; align-items: center; justify-content: center; gap: 5px; flex: 1; border-radius: 3px; background: #fff; }
.search input { width: 36px; padding: 0; border: 0; outline: 0; background: none; font: inherit; }
.search input::placeholder { color: #bdbdbd; }
.tree { flex: none; height: 166px; padding-top: 3px; overflow: hidden; background: #bfcdd9; border-bottom: 1px solid #8f979c; font-family: Roboto, sans-serif; color: #000; white-space: nowrap; }
.tree li { padding-left: 29px; }
.tree .top { display: flex; align-items: center; gap: 3px; padding-left: 6px; }
.top::before { content: ""; flex: none; width: 6px; height: 7px; background: #8a8f94; clip-path: polygon(0 0, 100% 50%, 0 100%); }
.open { background: #dededc; }
.open::before { clip-path: polygon(0 0, 100% 0, 50% 100%); }
.libs { flex: none; border-bottom: 2px solid #a0a3a5; font-family: Roboto, sans-serif; font-size: 11px; line-height: 14px; }
.libs li { display: flex; align-items: center; justify-content: space-between; height: 15px; padding: 0 6px 0 18px; border-bottom: 1px solid #a6a9ac; background: linear-gradient(#fff, #e6e6e6); }
.libs li:last-child { border-bottom: 0; }
.libs .active { background: linear-gradient(#8cc0f2, #b8ebfd); }
.shapes { flex: 1; min-height: 0; overflow: hidden; font-family: "Liberation Sans", Arial, sans-serif; color: #000; }
.shapes li { display: flex; align-items: center; gap: 8px; height: 31px; padding-left: 11px; }
.shapes svg { width: 28px; height: 28px; border: 1px solid #808386; background: linear-gradient(135deg, #cfcfcf, #fbfbfb 50%, #cdcdcd); }
.shapes .picked { color: #1a44a4; }
.picked svg { box-shadow: 0 0 0 2px #7fb3ec; }

.editor { display: grid; grid-template: 1fr 13px / 1fr 14px; flex: 1; min-width: 0; }
.canvas { display: flex; justify-content: center; min-height: 0; padding-top: 2px; overflow: hidden; background: #b0bfbf; }
.label { font-family: "DejaVu Sans Condensed", "DejaVu Sans", sans-serif; font-size: 10px; text-anchor: middle; fill: #222; }
.light { fill: #fff; }
.vscroll { display: flex; justify-content: center; padding: 4px 2px 22px; background: #fafafa; }
.vscroll span { width: 7px; border-radius: 4px; background: #c1c1c1; }
.footbar { grid-column: 1 / -1; display: flex; align-items: stretch; border-top: 1px solid #dcdcdc; background: #fafafa; }
.pause { display: flex; align-items: center; justify-content: center; width: 15px; border-right: 1px solid #777; background: #dadada; }
.page-nav { width: 20px; border-right: 1px solid #e0e0e0; font: 8px/10px "DejaVu Sans", sans-serif; color: #b4b4b4; }
.pick { display: flex; align-items: center; justify-content: space-between; width: 81px; padding: 0 3px 0 2px; background: #f1f1f1; }
.pick select { appearance: none; padding: 0; border: 0; background: none; font-family: inherit; font-size: 9px; line-height: 12px; color: #111; }
.pages { display: flex; align-items: center; justify-content: center; gap: 2px; width: 38px; border: 1px solid #999; border-width: 0 1px; background: #a5a5a5; }
.pages i { width: 8px; height: 9px; border: 1px solid #777; border-radius: 2px; background: #fff; }
.rail { flex: 1; }
.fit { display: flex; align-items: center; justify-content: center; width: 13px; background: #d4dde6; }

.status { display: flex; align-items: flex-start; flex: none; height: 15px; padding-left: 8px; background: linear-gradient(#efefef, #dedede); line-height: 12px; }
.ready { width: 178px; }
.dims { width: 281px; }
```
